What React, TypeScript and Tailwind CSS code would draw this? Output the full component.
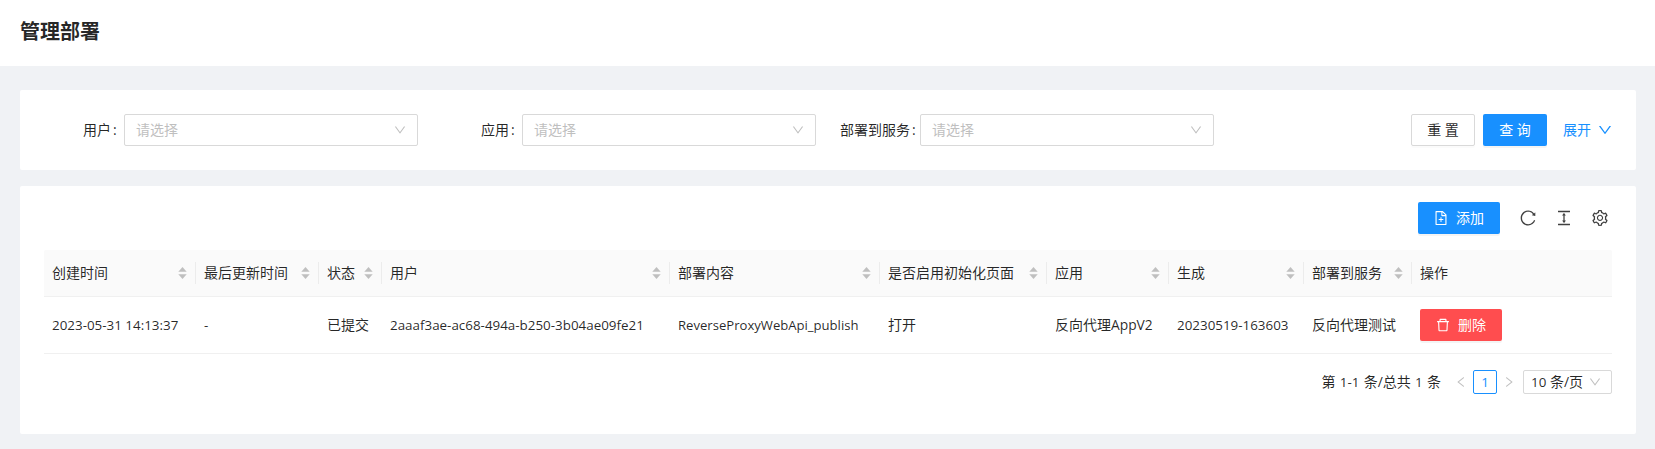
import React from 'react';
import {
  AiOutlineColumnHeight,
  AiOutlineDelete,
  AiOutlineDown,
  AiOutlineFileAdd,
  AiOutlineLeft,
  AiOutlineReload,
  AiOutlineRight,
  AiOutlineSetting,
} from 'react-icons/ai';

const box = '64 64 896 896';

function En({ children, className = 'text-[13.4px]' }: { children: React.ReactNode; className?: string }) {
  return <span className={className}>{children}</span>;
}

function Sorter() {
  return (
    <svg className="mr-px shrink-0" width="9" height="12" viewBox="0 0 9 12" fill="#bfbfbf">
      <path d="M4.5 0 L8.7 4.8 H0.3 Z" />
      <path d="M4.5 12 L8.7 7.2 H0.3 Z" />
    </svg>
  );
}

function Field({ label, width, gap = 'mr-[7px]' }: { label: string; width: string; gap?: string }) {
  return (
    <div className={`flex items-center ${width}`}>
      <div className="flex flex-1 justify-end">
        <span>{label}</span>
        <span className={`ml-[2px] w-[4px] ${gap}`}>:</span>
      </div>
      <div className="flex h-8 w-[294px] items-center justify-between rounded-xs border border-[#d9d9d9] px-[11px] text-[#bfbfbf]">
        <span>请选择</span>
        <AiOutlineDown viewBox={box} size={12} />
      </div>
    </div>
  );
}

const columns = [
  { title: '创建时间', width: 'w-[152px]' },
  { title: '最后更新时间', width: 'w-[123px]' },
  { title: '状态', width: 'w-[63px]' },
  { title: '用户', width: 'w-[288px]' },
  { title: '部署内容', width: 'w-[210px]' },
  { title: '是否启用初始化页面', width: 'w-[167px]' },
  { title: '应用', width: 'w-[122px]' },
  { title: '生成', width: 'w-[135px]' },
  { title: '部署到服务', width: 'w-[108px]' },
];

const cells: React.ReactNode[] = [
  <En>2023-05-31 14:13:37</En>,
  <En>-</En>,
  '已提交',
  <En>2aaaf3ae-ac68-494a-b250-3b04ae09fe21</En>,
  <En className="text-[13.1px]">ReverseProxyWebApi_publish</En>,
  '打开',
  <>反向代理<En className="text-[13.8px]">AppV2</En></>,
  <En>20230519-163603</En>,
  '反向代理测试',
];

export default function App() {
  return (
    <div className="h-[449px] w-[1655px] overflow-hidden bg-[#f0f2f5] font-['Open_Sans','Noto_Sans_CJK_SC',sans-serif] text-sm leading-[22px] text-black/85">
      <header className="flex h-[66px] items-center bg-white px-5 pb-0.5">
        <h1 className="text-xl font-bold leading-8">管理部署</h1>
      </header>

      <main className="flex flex-col gap-4 pl-5 pr-[19px] pt-6">
        <section className="flex h-20 items-center rounded-xs bg-white px-6">
          <Field label="用户" width="w-[374px]" />
          <Field label="应用" width="w-[398px]" />
          <Field label="部署到服务" width="w-[398px]" gap="mr-[4px]" />
          <div className="ml-auto flex items-center">
            <button className="h-8 w-16 rounded-xs border border-[#d9d9d9] shadow-[0_2px_0_rgba(0,0,0,0.016)]">重 置</button>
            <button className="ml-2 h-8 w-16 rounded-xs bg-[#1890ff] text-white shadow-[0_2px_0_rgba(0,0,0,0.045)]">查 询</button>
            <a className="ml-4 flex items-center text-[#1890ff]">
              展开
              <AiOutlineDown viewBox={box} className="ml-[7px]" size={14} />
            </a>
          </div>
        </section>

        <section className="h-[248px] rounded-xs bg-white px-6">
          <div className="flex h-16 items-center justify-end">
            <button className="flex h-8 w-[82px] items-center justify-center gap-2 rounded-xs bg-[#1890ff] text-white shadow-[0_2px_0_rgba(0,0,0,0.045)]">
              <AiOutlineFileAdd viewBox={box} size={14} />
              添加
            </button>
            <div className="ml-5 mr-1 flex gap-5 text-black/75">
              <AiOutlineReload viewBox={box} size={16} />
              <AiOutlineColumnHeight viewBox={box} size={16} />
              <AiOutlineSetting viewBox={box} size={16} />
            </div>
          </div>

          <div className="flex h-[47px] items-center rounded-t-xs border-b border-[#f0f0f0] bg-[#fafafa]">
            {columns.map((c) => (
              <div key={c.title} className={`flex h-[22px] shrink-0 items-center justify-between border-r border-[#ececec] pl-2 pr-[7px] ${c.width}`}>
                <span className="whitespace-nowrap">{c.title}</span>
                <Sorter />
              </div>
            ))}
            <div className="pl-2">操作</div>
          </div>
          <div className="flex h-[57px] items-center border-b border-[#f0f0f0]">
            {cells.map((cell, i) => (
              <div key={i} className={`shrink-0 whitespace-nowrap pl-2 ${columns[i].width}`}>{cell}</div>
            ))}
            <div className="pl-2">
              <button className="flex h-8 w-[82px] items-center justify-center gap-2 rounded-xs bg-[#ff4d4f] text-white shadow-[0_2px_0_rgba(0,0,0,0.045)]">
                <AiOutlineDelete viewBox={box} size={14} />
                删除
              </button>
            </div>
          </div>

          <div className="mt-4 flex h-6 items-center justify-end">
            <span className="[word-spacing:0.6px]">第 <En>1-1</En> 条/总共 <En>1</En> 条</span>
            <AiOutlineLeft viewBox={box} className="ml-[14px] text-black/25" size={12} />
            <span className="ml-[6px] flex h-6 w-6 items-center justify-center rounded-xs border border-[#1890ff] text-[#1890ff]"><En>1</En></span>
            <AiOutlineRight viewBox={box} className="ml-[6px] text-black/25" size={12} />
            <div className="ml-2 flex h-6 w-[89px] items-center justify-between rounded-xs border border-[#d9d9d9] pl-[7px] pr-[10px]">
              <span><En>10</En> 条/页</span>
              <AiOutlineDown viewBox={box} className="text-black/25" size={12} />
            </div>
          </div>
        </section>
      </main>
    </div>
  );
}
